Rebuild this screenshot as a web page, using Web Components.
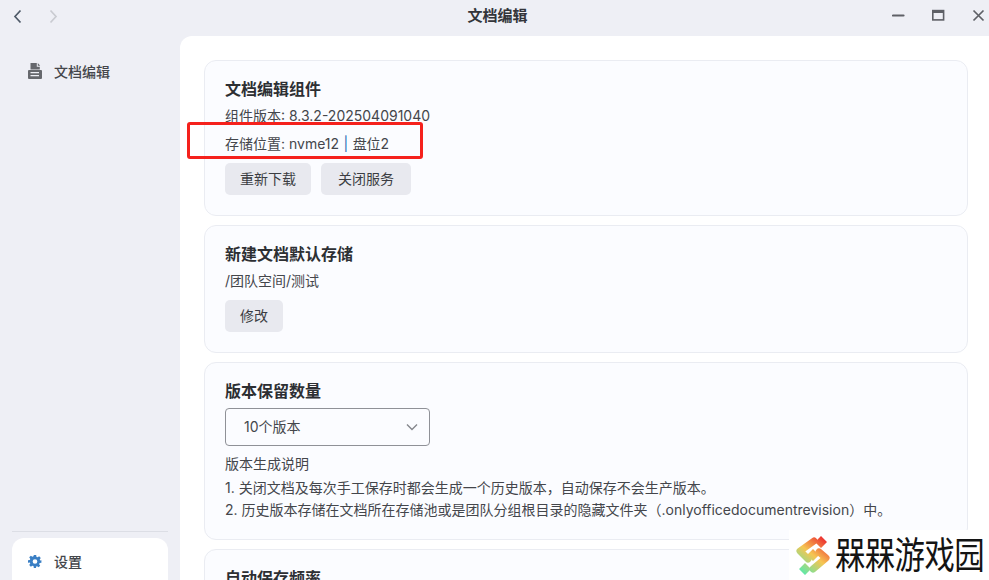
<!DOCTYPE html>
<html lang="zh">
<head>
<meta charset="utf-8">
<title>文档编辑</title>
<style>
html,body{margin:0;height:100%;overflow:hidden;background:#eeeff5}
body{font-family:Inter,"Noto Sans CJK SC",sans-serif;color:#3b3d42}
</style>
</head>
<body>
<app-window>
  <nav-item slot="nav" icon="doc">文档编辑</nav-item>
  <nav-item slot="footer" icon="gear" active>设置</nav-item>

  <setting-card heading="文档编辑组件">
    <p style="margin:0;line-height:28px">组件版本: 8.3.2-202504091040</p>
    <p style="margin:0;line-height:28px">存储位置: nvme12 <span style="color:#1f6fb5;padding:0 .5px">|</span> 盘位2</p>
    <div style="display:flex;gap:10px;margin-top:5px">
      <flat-button wide="86">重新下载</flat-button>
      <flat-button wide="90">关闭服务</flat-button>
    </div>
  </setting-card>

  <setting-card heading="新建文档默认存储">
    <p style="margin:0;line-height:28px">/团队空间/测试</p>
    <div style="margin-top:5px"><flat-button wide="58">修改</flat-button></div>
  </setting-card>

  <setting-card heading="版本保留数量" style="height:178px;box-sizing:border-box">
    <select-box style="margin-top:5px">10个版本</select-box>
    <p style="margin:6px 0 0;line-height:24px">版本生成说明</p>
    <p style="margin:1px 0 0;line-height:22px">1. 关闭文档及每次手工保存时都会生成一个历史版本，自动保存不会生产版本。</p>
    <p style="margin:0;line-height:22px">2. 历史版本存储在文档所在存储池或是团队分组根目录的隐藏文件夹（.onlyofficedocumentrevision）中。</p>
  </setting-card>

  <setting-card heading="自动保存频率"></setting-card>
</app-window>

<script>
const icons = {
  doc: `<svg width="14" height="16" viewBox="0 0 14 16"><path fill="#66686d" d="M2.500 0h6.300v3.800h3V6.400H2.500zM9.800 0l2.400 2.800H9.800zM1 7h12a1 1 0 0 1 1 1v7a1 1 0 0 1-1 1H1a1 1 0 0 1-1-1V8a1 1 0 0 1 1-1z"/><path fill="#eeeff5" d="M2.500 9h8.500v1.300H2.500zM2.500 12h8.500v1.300H2.500z"/></svg>`,
  gear: `<svg width="15" height="15" viewBox="0 0 24 24"><path fill="#3a7fc4" fill-rule="evenodd" d="M10 1h4l.6 3.100 1.900.8 2.600-1.800 2.800 2.800-1.800 2.600.8 1.900L23 10v4l-3.100.6-.8 1.900 1.800 2.600-2.800 2.800-2.600-1.800-1.900.8L13.900 23H10l-.6-3.100-1.900-.8-2.600 1.800-2.800-2.800 1.800-2.600-.8-1.900L0 14v-4l3.100-.6.8-1.900L2.100 4.900l2.800-2.800 2.600 1.800 1.900-.8zM12 8a4 4 0 1 0 0 8 4 4 0 0 0 0-8z"/></svg>`
};

const appWindowTemplate = document.createElement('template');
appWindowTemplate.innerHTML = `
  <style>
    :host{display:flex;flex-direction:column;height:580px;position:relative;overflow:hidden;background:#eeeff5}
    .bar{height:36px;flex:none;display:flex;align-items:center;justify-content:space-between;position:relative}
    .bar svg{display:block}
    .arrows{display:flex;gap:25px;padding-left:12px;margin-top:-4px}
    .title{position:absolute;left:0;right:0;text-align:center;font-size:15px;font-weight:600;color:#33353a;line-height:32px;top:0;padding-left:6px;box-sizing:border-box}
    .controls{display:flex;gap:27px;padding-right:4px;align-items:center;position:relative;margin-top:-6px}
    .body{flex:1;display:flex;min-height:0}
    .side{width:180px;flex:none;display:flex;flex-direction:column;box-sizing:border-box;padding:17px 12px 0}
    .nav{flex:1}
    .foot{border-top:1px solid #dcdee5;padding-top:6px;height:42px;flex:none;box-sizing:content-box}
    .main{flex:1;background:#fff;border-top-left-radius:12px;padding:24px 21px 0 24px;display:flex;flex-direction:column;gap:9px;overflow:hidden}
    .mark{position:absolute;left:789px;top:530px;width:200px;height:50px;background:#fff;display:flex;align-items:center;gap:3px;padding-left:5px;box-sizing:border-box}
    .mark span{font-family:"Noto Sans CJK SC",sans-serif;font-size:31px;line-height:50px;color:#141414;white-space:nowrap;letter-spacing:-.6px;transform:scale(.98,1.2);transform-origin:0 50%;margin-top:-4px}
    .flag{position:absolute;left:187px;top:122px;width:236px;height:37px;box-sizing:border-box;border:3px solid #f5211c;border-radius:3px}
  </style>
  <div class="bar">
    <div class="arrows">
      <svg width="11" height="15" viewBox="0 0 11 15"><path d="M8.500 1.500L3 7.500l5.500 6" fill="none" stroke="#4e5a68" stroke-width="1.700"/></svg>
      <svg width="11" height="15" viewBox="0 0 11 15"><path d="M2.500 1.500L8 7.500l-5.500 6" fill="none" stroke="#c9cbd1" stroke-width="1.700"/></svg>
    </div>
    <div class="title">文档编辑</div>
    <div class="controls">
      <svg width="13" height="13" viewBox="0 0 13 13"><path d="M1 6.500h10.500" stroke="#5e6066" stroke-width="2.200" stroke-linecap="round"/></svg>
      <svg width="13" height="13" viewBox="0 0 13 13"><rect x=".8" y="1.600" width="10.800" height="9.300" fill="none" stroke="#5e6066" stroke-width="1.600"/><path d="M1 3h10.600" stroke="#5e6066" stroke-width="2"/></svg>
      <svg width="13" height="13" viewBox="0 0 13 13"><path d="M1.500 1.500l10 10M11.500 1.500l-10 10" stroke="#5e6066" stroke-width="1.700"/></svg>
    </div>
  </div>
  <div class="body">
    <div class="side">
      <div class="nav"><slot name="nav"></slot></div>
      <div class="foot"><slot name="footer"></slot></div>
    </div>
    <div class="main"><slot></slot></div>
  </div>
  <div class="flag"></div>
  <div class="mark">
    <svg width="38" height="40" viewBox="0 0 38 40" style="flex:none">
      <defs><linearGradient id="wm" gradientUnits="userSpaceOnUse" x1="6" y1="36" x2="32" y2="4"><stop offset="0" stop-color="#5fe8a8"/><stop offset=".5" stop-color="#f6c552"/><stop offset="1" stop-color="#ec2a2e"/></linearGradient></defs>
      <g fill="none" stroke="url(#wm)" stroke-width="7" stroke-linejoin="round" stroke-linecap="round">
        <path d="M20 6L6 16 14 24"/>
        <path d="M25 17L32 23 19 34"/>
      </g>
      <path fill="url(#wm)" d="M27 1l6 6-6 6-6-6zM19 14l6 6-6 6-6-6zM11 28l6 6-6 6-6-6z"/>
    </svg>
    <span>槑槑游戏园</span>
  </div>
`;
class AppWindow extends HTMLElement {
  constructor() {
    super();
    this.attachShadow({ mode: 'open' });
    this.shadowRoot.append(appWindowTemplate.content.cloneNode(true));
  }
}
customElements.define('app-window', AppWindow);

const navItemTemplate = document.createElement('template');
navItemTemplate.innerHTML = `
  <style>
    :host{display:flex;align-items:center;height:36px;padding-left:16px;gap:12px;font-size:14px;font-weight:500;color:#44464b;border-radius:12px 12px 0 0}
    :host([active]){background:#fff;height:42px;padding-top:4px;box-sizing:border-box}
    .ic{width:14px;height:16px;display:flex;align-items:center;justify-content:center}
  </style>
  <span class="ic"></span><slot></slot>
`;
class NavItem extends HTMLElement {
  constructor() {
    super();
    this.attachShadow({ mode: 'open' });
    this.shadowRoot.append(navItemTemplate.content.cloneNode(true));
  }
  connectedCallback() {
    this.shadowRoot.querySelector('.ic').innerHTML = icons[this.getAttribute('icon')];
  }
}
customElements.define('nav-item', NavItem);

const settingCardTemplate = document.createElement('template');
settingCardTemplate.innerHTML = `
  <style>
    :host{display:block;flex:none;background:#fbfcff;border:1px solid #eaecf2;border-radius:12px;padding:16px 20px 20px;font-size:14px;color:#44464b}
    h3{margin:0 0 1px;font-size:16px;font-weight:600;line-height:24px;color:#2d2f33}
  </style>
  <h3></h3>
  <slot></slot>
`;
class SettingCard extends HTMLElement {
  constructor() {
    super();
    this.attachShadow({ mode: 'open' });
    this.shadowRoot.append(settingCardTemplate.content.cloneNode(true));
  }
  connectedCallback() {
    this.shadowRoot.querySelector('h3').textContent = this.getAttribute('heading');
  }
}
customElements.define('setting-card', SettingCard);

const flatButtonTemplate = document.createElement('template');
flatButtonTemplate.innerHTML = `
  <style>
    :host{display:inline-flex;align-items:center;justify-content:center;box-sizing:border-box;height:32px;padding-bottom:3px;background:#e8e9ef;border-radius:5px;font-size:14px;color:#3b3d42}
  </style>
  <slot></slot>
`;
class FlatButton extends HTMLElement {
  constructor() {
    super();
    this.attachShadow({ mode: 'open' });
    this.shadowRoot.append(flatButtonTemplate.content.cloneNode(true));
  }
  connectedCallback() {
    this.style.width = this.getAttribute('wide') + 'px';
  }
}
customElements.define('flat-button', FlatButton);

const selectBoxTemplate = document.createElement('template');
selectBoxTemplate.innerHTML = `
  <style>
    :host{display:flex;align-items:center;justify-content:space-between;box-sizing:border-box;width:205px;height:38px;border:1px solid #8f9197;border-radius:4px;padding:0 11px 2px 18px;font-size:14px;color:#44464b}
    svg{display:block;margin-top:2px}
  </style>
  <slot></slot>
  <svg width="12" height="8" viewBox="0 0 12 8"><path d="M1 1.500l5 5 5-5" fill="none" stroke="#85878d" stroke-width="1.400"/></svg>
`;
class SelectBox extends HTMLElement {
  constructor() {
    super();
    this.attachShadow({ mode: 'open' });
    this.shadowRoot.append(selectBoxTemplate.content.cloneNode(true));
  }
}
customElements.define('select-box', SelectBox);
</script>
</body>
</html>
